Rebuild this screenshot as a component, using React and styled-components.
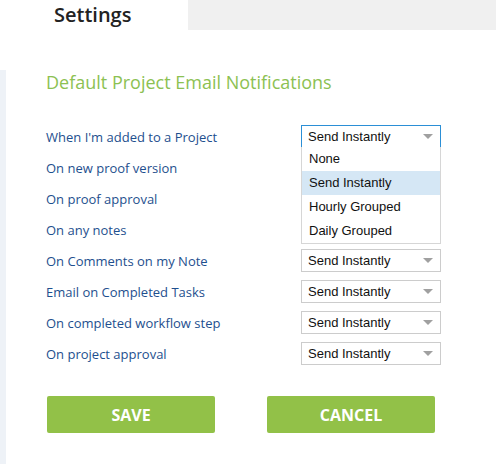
import React from 'react'
import styled, { createGlobalStyle } from 'styled-components'

const GlobalStyle = createGlobalStyle`
  body {
    margin: 0;
    background: #ffffff;
    font-family: "Open Sans", "Liberation Sans", sans-serif;
  }
`

const rows = [
  'When I\'m added to a Project',
  'On new proof version',
  'On proof approval',
  'On any notes',
  'On Comments on my Note',
  'Email on Completed Tasks',
  'On completed workflow step',
  'On project approval',
]

const options = ['None', 'Send Instantly', 'Hourly Grouped', 'Daily Grouped']

const Arrow = () => (
  <svg width="10" height="6" viewBox="0 0 10 6">
    <path d="M0 0 H10 L5 5 Z" fill="#a0a0a0" />
  </svg>
)

const Select = ({ open }) => (
  <SelectBox $open={open}>
    <span>Send Instantly</span>
    <Arrow />
    {open && (
      <Menu>
        {options.map((o) => (
          <MenuItem key={o} $active={o === 'Send Instantly'}>{o}</MenuItem>
        ))}
      </Menu>
    )}
  </SelectBox>
)

const App = () => {
  return (
    <>
      <GlobalStyle />
      <TopBar>
        <Tab>Settings</Tab>
        <TabFiller />
      </TopBar>
      <Body>
        <SideStrip />
        <Content>
          <Heading>Default Project Email Notifications</Heading>
          <Grid>
            {rows.map((r, i) => (
              <React.Fragment key={r}>
                <Label>{r}</Label>
                <Cell>
                  {i === 0 && <Select open />}
                  {i >= 4 && <Select />}
                </Cell>
              </React.Fragment>
            ))}
          </Grid>
          <Buttons>
            <Button>Save</Button>
            <Button>Cancel</Button>
          </Buttons>
        </Content>
      </Body>
    </>
  )
}

export default App

const TopBar = styled.div`
  display: flex;
  height: 30px;
`

const Tab = styled.div`
  width: 188px;
  box-sizing: border-box;
  padding-left: 54px;
  font-size: 20px;
  font-weight: 600;
  line-height: 30px;
  color: #222222;
`

const TabFiller = styled.div`
  flex: 1;
  background: #f0f0f0;
`

const Body = styled.div`
  display: flex;
  margin-top: 40px;
  min-height: 394px;
`

const SideStrip = styled.div`
  width: 6px;
  background: #eef2f7;
`

const Content = styled.div`
  padding-left: 40px;
`

const Heading = styled.h2`
  margin: 0;
  font-size: 18px;
  line-height: 25px;
  font-weight: 400;
  color: #8cc152;
`

const Grid = styled.div`
  display: grid;
  grid-template-columns: 255px 140px;
  grid-auto-rows: 31px;
  margin-top: 26px;
  align-items: center;
`

const Label = styled.div`
  font-size: 13px;
  color: #1e4f8e;
`

const Cell = styled.div`
  height: 23px;
`

const SelectBox = styled.div`
  position: relative;
  height: 23px;
  box-sizing: border-box;
  border: 1px solid ${(p) => (p.$open ? '#2b8fd6' : '#cccccc')};
  display: flex;
  align-items: center;
  justify-content: space-between;
  padding: 0 7px 0 6px;
  font-family: "Liberation Sans", Arial, sans-serif;
  font-size: 13px;
  color: #111111;
  background: #ffffff;
`

const Menu = styled.div`
  position: absolute;
  top: 100%;
  left: -1px;
  right: -1px;
  background: #ffffff;
  border: 1px solid #d6d6d6;
  border-top: none;
  z-index: 2;
`

const MenuItem = styled.div`
  height: 24px;
  line-height: 24px;
  padding-left: 7px;
  background: ${(p) => (p.$active ? '#d5e7f5' : 'transparent')};
`

const Buttons = styled.div`
  display: flex;
  gap: 52px;
  margin-top: 27px;
  padding-left: 1px;
`

const Button = styled.button`
  width: 168px;
  height: 37px;
  border: none;
  border-radius: 2px;
  background: #92c148;
  color: #ffffff;
  font-family: "Open Sans", sans-serif;
  font-weight: 700;
  font-size: 16px;
  text-transform: uppercase;
`
